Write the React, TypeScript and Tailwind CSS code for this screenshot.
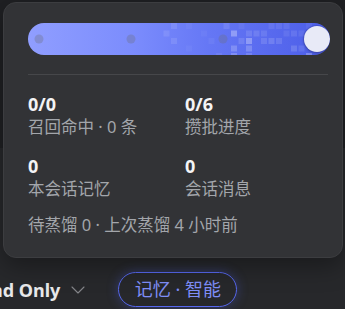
import { ChevronDown } from "lucide-react";

const squares: [number, number, number][] = [
  [1, 0, 0.1], [3, 0, 0.04], [8, 0, 0.1], [10, 0, 0.05], [14, 0, 0.08], [15, 0, 0.08], [16, 0, 0.08], [19, 0, 0.06],
  [0, 1, 0.1], [5, 1, 0.04], [9, 1, 0.3], [11, 1, 0.12], [12, 1, 0.12], [13, 1, 0.1], [16, 1, 0.08], [17, 1, 0.1], [18, 1, 0.08],
  [1, 2, 0.1], [6, 2, 0.05], [10, 2, 0.12], [11, 2, 0.3], [13, 2, 0.12], [14, 2, 0.15], [15, 2, 0.12], [20, 2, 0.06],
  [3, 3, 0.04], [9, 3, 0.2], [11, 3, 0.2], [17, 3, 0.15], [18, 3, 0.1],
  [7, 4, 0.08], [9, 4, 0.2], [11, 4, 0.15], [19, 4, 0.25],
];

const stats = [
  { value: "0/0", label: "召回命中 · 0 条" },
  { value: "0/6", label: "攒批进度" },
  { value: "0", label: "本会话记忆" },
  { value: "0", label: "会话消息" },
];

function ProgressBar() {
  return (
    <div className="relative h-[32px] w-[302px] rounded-full bg-[linear-gradient(90deg,#909eff_0%,#7b8cfd_35%,#6577f5_60%,#4b5de8_100%)] overflow-hidden">
      <svg className="absolute inset-0" width="302" height="32" viewBox="0 0 302 32">
        {squares.map(([c, r, o], i) => (
          <rect key={i} x={135.5 + 7.5 * c} y={7.5 * r} width="6" height="6" fill="#ffffff" fillOpacity={o} />
        ))}
        <circle cx="11" cy="16" r="4.5" fill="#6e6f80" fillOpacity="0.35" />
        <circle cx="103" cy="16" r="4.5" fill="#6e6f80" fillOpacity="0.35" />
        <circle cx="195" cy="16" r="4.5" fill="#6e6f80" fillOpacity="0.35" />
      </svg>
      <div className="absolute right-0 top-[3px] h-[26px] w-[26px] rounded-full bg-[#e8eaf7] shadow-[0_0_0_1px_rgba(60,70,180,0.35),0_1px_3px_rgba(0,0,0,0.35)]" />
    </div>
  );
}

export default function App() {
  return (
    <div className="relative w-[345px] h-[309px] overflow-hidden bg-[#27282b] font-['Noto_Sans','Noto_Sans_CJK_SC',sans-serif]">
      <div className="h-[148px] bg-[#1f2023]" />
      <div className="pt-[124px] flex items-center">
        <span className="ml-[-55px] text-[18px] font-bold leading-[24px] text-[#e8e8ea] whitespace-nowrap">Append Only</span>
        <ChevronDown className="ml-[6px] text-[#85868a]" size={24} strokeWidth={1.1} />
        <div className="ml-[28px] h-[35px] w-[119px] rounded-full border-[1.5px] border-[#5667ee] flex items-center justify-center text-[18px] text-[#7f8ef7] shadow-[0_0_12px_rgba(80,100,240,0.35)]">
          记忆 · 智能
        </div>
      </div>

      <div className="absolute left-[3px] top-[2px] w-[340px] h-[256px] rounded-[13px] bg-[#323336] border border-[#3c3d40] shadow-[0_8px_24px_rgba(0,0,0,0.35)] pt-[20px] pl-[24px]">
        <ProgressBar />
        <div className="mt-[19px] h-px w-[300px] bg-[#46474a]" />
        <div className="mt-[17px] grid grid-cols-[157px_1fr] gap-y-[16px]">
          {stats.map((s) => (
            <div key={s.label} className="flex flex-col">
              <span className="text-[18px] leading-[24px] font-bold text-[#f4f4f5]">{s.value}</span>
              <span className="text-[16.5px] leading-[22px] text-[#a3a6ab]">{s.label}</span>
            </div>
          ))}
        </div>
        <div className="mt-[14px] text-[16.5px] leading-[22px] text-[#a3a6ab]">
          待蒸馏 0 · 上次蒸馏 4 小时前
        </div>
      </div>
    </div>
  );
}
